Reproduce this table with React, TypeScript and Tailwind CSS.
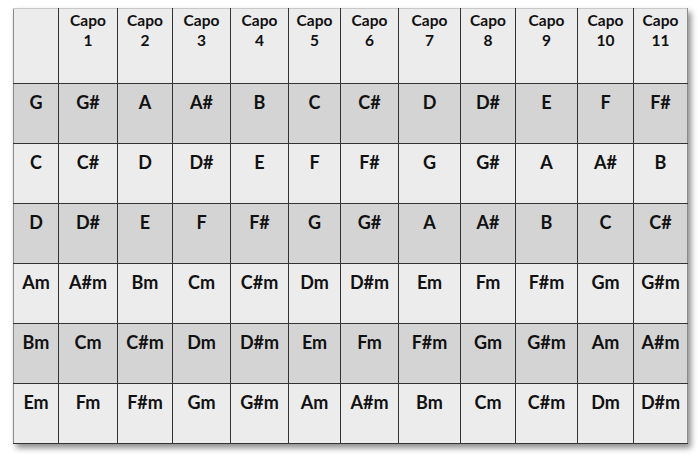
import React from 'react';

const widths = [45, 59, 55, 58, 58, 52, 58, 62, 55, 62, 56, 54];

const rows: { chords: string[]; shade: boolean }[] = [
    { chords: ['G', 'G#', 'A', 'A#', 'B', 'C', 'C#', 'D', 'D#', 'E', 'F', 'F#'], shade: true },
    { chords: ['C', 'C#', 'D', 'D#', 'E', 'F', 'F#', 'G', 'G#', 'A', 'A#', 'B'], shade: false },
    { chords: ['D', 'D#', 'E', 'F', 'F#', 'G', 'G#', 'A', 'A#', 'B', 'C', 'C#'], shade: true },
    { chords: ['Am', 'A#m', 'Bm', 'Cm', 'C#m', 'Dm', 'D#m', 'Em', 'Fm', 'F#m', 'Gm', 'G#m'], shade: false },
    { chords: ['Bm', 'Cm', 'C#m', 'Dm', 'D#m', 'Em', 'Fm', 'F#m', 'Gm', 'G#m', 'Am', 'A#m'], shade: true },
    { chords: ['Em', 'Fm', 'F#m', 'Gm', 'G#m', 'Am', 'A#m', 'Bm', 'Cm', 'C#m', 'Dm', 'D#m'], shade: false },
];

export default function App() {
    return (
        <div className="w-[700px] h-[460px] bg-white pl-[13px] pt-[8px] font-['Lato','Open_Sans',sans-serif] text-[#111]">
            <table className="border-collapse table-fixed w-[674px] shadow-[3px_4px_6px_rgba(0,0,0,0.45)]">
                <colgroup>
                    {widths.map((w, i) => (
                        <col key={i} style={{ width: w }} />
                    ))}
                </colgroup>
                <tbody>
                    {/* HEADER */}
                    <tr className="h-[75px] bg-[#ececec]">
                        {widths.map((_, i) => (
                            <td
                                key={i}
                                className="border border-[#333] first:border-l-[#8a8a8a] border-t-[#c8c8c8] last:border-r-[#8a8a8a] align-top text-center pt-[1px] text-[15.5px] leading-[20px] font-bold"
                            >
                                {i > 0 && (
                                    <>
                                        Capo
                                        <br />
                                        {i}
                                    </>
                                )}
                            </td>
                        ))}
                    </tr>
                    {/* CHORD ROWS */}
                    {rows.map((row, r) => (
                        <tr key={r} className={`h-[60px] ${row.shade ? 'bg-[#d4d4d4]' : 'bg-[#ececec]'}`}>
                            {row.chords.map((c, i) => (
                                <td
                                    key={i}
                                    className="border border-[#333] first:border-l-[#8a8a8a] last:border-r-[#8a8a8a] align-top text-center pt-[6px] text-[18px] leading-[24px] font-bold"
                                >
                                    {c}
                                </td>
                            ))}
                        </tr>
                    ))}
                </tbody>
            </table>
        </div>
    );
}
